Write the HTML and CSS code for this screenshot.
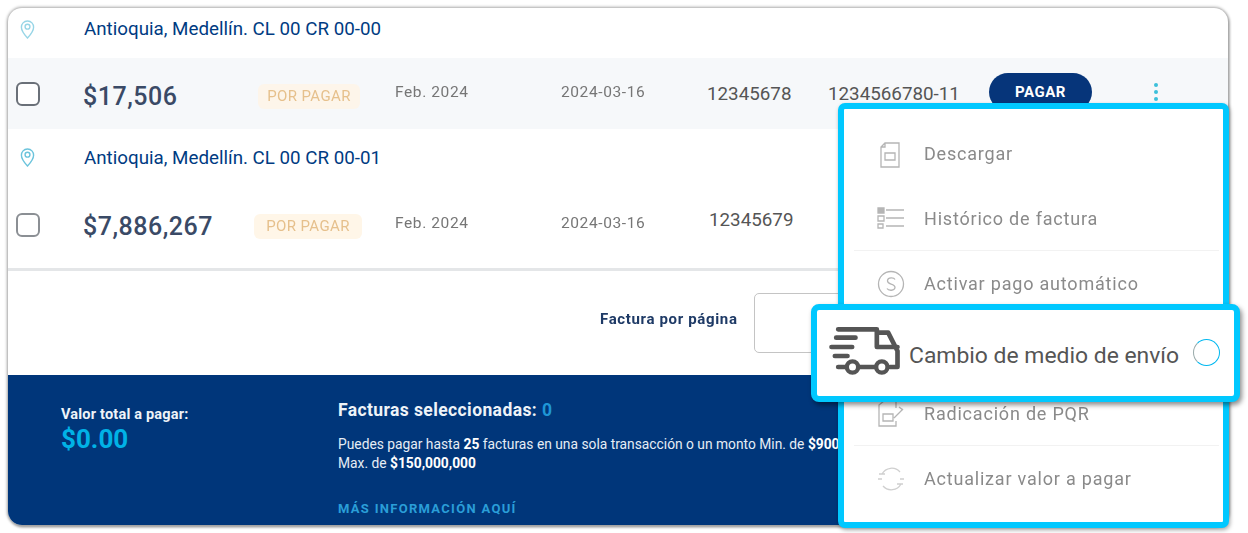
FILE: index.html
```html
<!DOCTYPE html>
<html lang="es">
<head>
<meta charset="utf-8">
<title>Facturas</title>
<link rel="stylesheet" href="styles.css">
</head>
<body>
<div class="stage">
  <main class="card">
    <div class="address first">
      <svg class="pin" viewBox="0 0 16 20"><path d="M8 1C4 1 1.500 4 1.500 7.500 1.500 12 8 19 8 19s6.500-7 6.500-11.500C14.500 4 12 1 8 1z"/><circle cx="8" cy="7" r="2.600"/></svg>
      <span>Antioquia, Medellín. CL 00 CR 00-00</span>
    </div>
    <div class="bill shaded">
      <span class="check"></span>
      <span class="amount">$17,506</span>
      <span class="status">POR PAGAR</span>
      <span class="muted">Feb. 2024</span>
      <span class="muted">2024-03-16</span>
      <span class="num">12345678</span>
      <span class="num">1234566780-11</span>
      <span class="pay">PAGAR</span>
      <span class="kebab"><i></i><i></i><i></i></span>
    </div>
    <div class="address second">
      <svg class="pin" viewBox="0 0 16 20"><path d="M8 1C4 1 1.500 4 1.500 7.500 1.500 12 8 19 8 19s6.500-7 6.500-11.500C14.500 4 12 1 8 1z"/><circle cx="8" cy="7" r="2.600"/></svg>
      <span>Antioquia, Medellín. CL 00 CR 00-01</span>
    </div>
    <div class="bill last">
      <span class="check"></span>
      <span class="amount">$7,886,267</span>
      <span class="status">POR PAGAR</span>
      <span class="muted">Feb. 2024</span>
      <span class="muted">2024-03-16</span>
      <span class="num nudge">12345679</span>
    </div>
    <div class="pager">
      <span class="pager-label">Factura por página</span>
      <span class="select"></span>
    </div>
    <footer class="summary">
      <div class="total">
        <div class="total-label">Valor total a pagar:</div>
        <div class="total-value">$0.00</div>
      </div>
      <div class="info">
        <div class="info-title">Facturas seleccionadas: <span class="zero">0</span></div>
        <p class="info-text">Puedes pagar hasta <b>25</b> facturas en una sola transacción o un monto Min. de <b>$900</b><br>Max. de <b>$150,000,000</b></p>
        <div class="info-link">MÁS INFORMACIÓN AQUÍ</div>
      </div>
    </footer>
  </main>

  <aside class="menu">
    <div class="item">
      <svg class="item-icon" viewBox="0 0 28 28"><path d="M8 3h14v24H4V7zM8 3v4H4"/><path d="M8 13h10v7H8z"/></svg>
      <span>Descargar</span>
    </div>
    <div class="item rule">
      <svg class="item-icon" viewBox="0 0 28 28"><path class="solid" d="M1 4h6v5H1z"/><path d="M1 12h6v5H1zM1 20h5v4H1zM9 6h18M9 14h18M9 22h18"/></svg>
      <span>Histórico de factura</span>
    </div>
    <div class="item">
      <svg class="item-icon" viewBox="0 0 28 28"><circle cx="14" cy="14" r="12.500"/><path d="M18 9.500c-1-2-7-2.500-7.500 1C10 15 18 13 18 17.500c-.300 3.500-6.500 3.500-8 1"/></svg>
      <span>Activar pago automático</span>
    </div>
    <div class="item"></div>
    <div class="item rule">
      <svg class="item-icon" viewBox="0 0 28 28"><path d="M19 9V2H7L2 6v21h17v-5"/><path d="M6 15h10v7H6zM17 19l9-9M22 8l4 3"/></svg>
      <span>Radicación de PQR</span>
    </div>
    <div class="item">
      <svg class="item-icon faint" viewBox="0 0 28 28"><path d="M5 9a11 11 0 0 1 18-2M24 19a11 11 0 0 1-18 2M2 9h6M1 14h4M23 14h4M20 19h6"/></svg>
      <span>Actualizar valor a pagar</span>
    </div>
  </aside>

  <div class="callout">
    <svg class="truck" viewBox="85 115 215 150">
      <path class="truck-line" d="M112 125H228V178H290M228 135H262L290 190V238H268M175 238H222"/>
      <path class="truck-line" d="M106 150H164M92 178H154M102 205H140M112 238H134"/>
      <circle class="truck-wheel" cx="155" cy="238" r="17"/>
      <circle class="truck-wheel" cx="243" cy="238" r="17"/>
    </svg>
    <span class="callout-text">Cambio de medio de envío</span>
    <span class="radio"></span>
  </div>
</div>
</body>
</html>
```
FILE: styles.css
```css
* { box-sizing: border-box; }
html, body { margin: 0; padding: 0; background: #fff; }
body { font-family: Roboto, "Liberation Sans", sans-serif; }

.stage { position: relative; width: 1248px; height: 533px; padding: 8px 20px 8px 8px; overflow: hidden; }

.card {
  height: 517px;
  border-radius: 14px;
  overflow: hidden;
  background: #fff;
  display: flex;
  flex-direction: column;
  box-shadow: 0 0 3px 1px #a9a9a9, 1px 2px 3px #8a8a8a;
}

.address { display: flex; align-items: center; color: #003b82; font-size: 18.750px; padding-left: 12px; }
.address.first { height: 50px; padding-bottom: 8px; }
.address.second { height: 57px; }
.pin { width: 15px; height: 19px; margin-right: 49px; fill: none; stroke: #6cc4dc; stroke-width: 1.500; }
.first .pin { opacity: .7; }

.bill {
  display: grid;
  grid-template-columns: 67px 171px 141px 166px 146px 121px 161px 165px 1fr;
  align-items: center;
  padding-left: 8px;
}
.shaded { height: 71px; background: #f6f8fa; }
.last { height: 85px; border-bottom: 3px solid #e4e6e8; }

.check { width: 24px; height: 24px; border: 2px solid #6a7078; border-radius: 6px; background: #fff; }
.last .check { border-color: #8b8f94; margin-bottom: 5px; }
.amount { font-size: 25px; font-weight: 500; color: #3a4a66; letter-spacing: .5px; }
.shaded .amount { margin-top: 6px; }
.last .amount { margin-bottom: 2px; }
.status {
  width: 108px;
  height: 25px;
  line-height: 25px;
  text-align: center;
  font-size: 15px;
  letter-spacing: .4px;
  color: #e6c08c;
  background: #fff6e8;
  border-radius: 6px;
  filter: blur(.4px);
}
.shaded .status { background: #fdf5ea; width: 102px; margin-left: 4px; margin-top: 5px; }
.last .status { margin-bottom: 1px; }
.muted { font-size: 15.500px; color: #767676; letter-spacing: .6px; filter: blur(.3px); }
.shaded .muted { margin-bottom: 3px; }
.last .muted { margin-bottom: 9px; }
.num { font-size: 18.800px; color: #555; }
.last .num { margin-bottom: 14px; }
.nudge { padding-left: 2px; }
.pay {
  width: 103px;
  height: 38px;
  border-radius: 19px;
  background: #06357a;
  color: #fff;
  font-size: 15px;
  font-weight: 700;
  letter-spacing: .5px;
  text-align: center;
  line-height: 38px;
  margin-bottom: 3px;
}
.kebab { display: flex; flex-direction: column; gap: 3px; align-items: flex-start; margin-bottom: 3px; }
.kebab i { width: 4px; height: 4px; border-radius: 50%; background: #3cc0da; }

.pager { flex: 1; display: flex; align-items: center; padding-left: 592px; }
.pager-label { font-size: 15px; font-weight: 700; letter-spacing: .65px; color: #1e3a66; width: 154px; margin-bottom: 8px; white-space: nowrap; filter: blur(.3px); }
.select { width: 200px; height: 60px; border: 1.500px solid #c4c4c4; border-radius: 5px; }

.summary { height: 150px; background: #00367a; color: #fff; display: flex; }
.total { width: 330px; padding: 30px 0 0 53px; }
.total-label { font-size: 14.500px; font-weight: 700; color: #eef3f8; letter-spacing: .2px; margin-top: 1px; }
.total-value { font-size: 26px; font-weight: 700; color: #00b2e6; margin-top: 1px; }
.info { padding-top: 25px; white-space: nowrap; }
.info-title { font-size: 17.500px; font-weight: 700; color: #eef3f8; letter-spacing: .4px; }
.zero { color: #1f96d6; }
.info-text { margin: 15px 0 0; font-size: 13.800px; line-height: 19px; color: #e6edf5; }
.info-text b { color: #fff; }
.info-link { margin-top: 28px; font-size: 13px; font-weight: 700; letter-spacing: 1.300px; color: #2a9ed8; }

.menu {
  position: absolute;
  left: 838px;
  top: 103px;
  width: 391px;
  height: 425px;
  background: #fff;
  border: 6px solid #00c8ff;
  border-radius: 7px;
  padding: 12px 0 0 10px;
  display: flex;
  flex-direction: column;
  box-shadow: 1px 2px 4px rgba(0,0,0,.35);
}
.item {
  flex: none;
  height: 65px;
  display: flex;
  align-items: center;
  margin-right: 4px;
  padding-left: 23px;
  font-size: 18px;
  letter-spacing: .8px;
  color: #8a8a8a;
}
.item span { filter: blur(.4px); }
.rule { border-bottom: 1px solid #f2f2f2; }
.item-icon { width: 28px; height: 28px; margin-right: 19px; flex: none; fill: none; stroke: #b5b5b5; stroke-width: 1.300; }
.item-icon .solid { fill: #b5b5b5; }
.item-icon.faint { stroke: #cfcfcf; }

.callout {
  position: absolute;
  left: 811px;
  top: 304px;
  width: 429px;
  height: 98px;
  background: #fff;
  border: 6px solid #00c8ff;
  border-radius: 8px;
  display: flex;
  align-items: center;
  padding: 0 14px 0 13px;
  box-shadow: 2px 3px 5px rgba(0,0,0,.45);
}
.truck { width: 72px; height: 50px; flex: none; margin-right: 8px; margin-top: -4px; margin-left: -1px; }
.truck-line { stroke: #555; stroke-width: 14; stroke-linecap: round; stroke-linejoin: round; fill: none; }
.truck-wheel { fill: #fff; stroke: #555; stroke-width: 13; }
.callout-text { font-size: 22.900px; color: #555; flex: 1; white-space: nowrap; margin-top: 4px; }
.radio { width: 27px; height: 27px; border-radius: 50%; border: 1.500px solid #00b8f0; border-left-color: #9aa; margin-top: -2px; }
```
